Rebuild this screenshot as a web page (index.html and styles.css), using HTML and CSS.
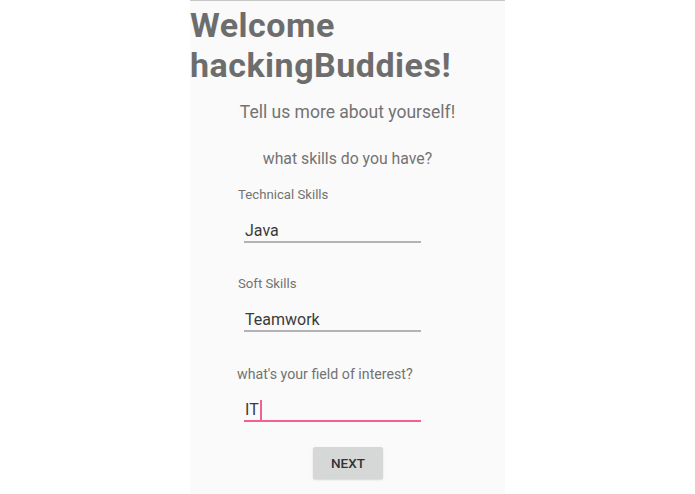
FILE: index.html
```html
<!DOCTYPE html>
<html>
<head>
<meta charset="utf-8">
<link rel="stylesheet" href="styles.css">
</head>
<body>
<div class="screen">
  <h1 class="title">Welcome hackingBuddies!</h1>
  <p class="subtitle">Tell us more about yourself!</p>
  <p class="question">what skills do you have?</p>
  <div class="form">
    <div class="label">Technical Skills</div>
    <div class="field"><span class="value">Java</span></div>
    <div class="label label-gap">Soft Skills</div>
    <div class="field"><span class="value">Teamwork</span></div>
    <div class="label label-gap label-left">what's your field of interest?</div>
    <div class="field field-active"><span class="value">IT</span><span class="cursor"></span></div>
  </div>
  <div class="actions"><button class="btn">NEXT</button></div>
</div>
</body>
</html>
```
FILE: styles.css
```css
html, body {
  margin: 0;
  padding: 0;
  background: #ffffff;
}
body {
  font-family: Roboto, "Liberation Sans", sans-serif;
  width: 695px;
  height: 494px;
  overflow: hidden;
}
.screen {
  margin-left: 190px;
  width: 315px;
  height: 493px;
  background: #fafafa;
  border-top: 1px solid #c8c8c8;
  display: flex;
  flex-direction: column;
}
.title {
  margin: 0;
  font-size: 34px;
  letter-spacing: 0.5px;
  font-weight: 700;
  line-height: 40px;
  color: #6d6d6d;
  width: 290px;
  padding-top: 4px;
}
.subtitle {
  margin: 15px 0 0 0;
  text-align: center;
  font-size: 17.5px;
  color: #737373;
  line-height: 24px;
}
.question {
  margin: 24px 0 0 0;
  text-align: center;
  font-size: 15.8px;
  color: #737373;
  line-height: 22px;
}
.form {
  padding-left: 48px;
  margin-top: 16px;
}
.label {
  font-size: 13.2px;
  color: #737373;
  line-height: 18px;
}
.label-gap {
  margin-top: 32px;
}
.label-left {
  margin-left: -1px;
  margin-top: 33px;
  font-size: 14.2px;
}
.field {
  margin: 17px 0 0 6px;
  width: 177px;
  border-bottom: 2px solid #b3b3b3;
  height: 20px;
  display: flex;
  align-items: center;
}
.field-active {
  border-bottom-color: #f06292;
}
.value {
  font-size: 16px;
  color: #3a3a3a;
  padding-left: 1px;
  line-height: 20px;
}
.cursor {
  display: inline-block;
  width: 2px;
  height: 20px;
  background: #f06292;
  margin-left: 1px;
}
.actions {
  display: flex;
  justify-content: center;
  margin-top: 25px;
  padding-left: 1px;
}
.btn {
  width: 70px;
  height: 32px;
  border: none;
  border-radius: 2px;
  background: #d6d7d7;
  color: #333333;
  font-family: Roboto, "Liberation Sans", sans-serif;
  font-weight: 500;
  font-size: 13.5px;
  box-shadow: 0 1px 2px rgba(0,0,0,0.15);
  padding: 0;
}
```
